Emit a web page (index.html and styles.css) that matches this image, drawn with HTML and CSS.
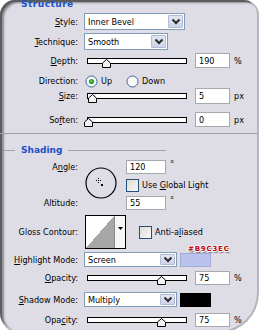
FILE: index.html
```html
<!DOCTYPE html>
<html>
<head>
<meta charset="utf-8">
<title>Bevel and Emboss</title>
<link rel="stylesheet" href="styles.css">
</head>
<body>
<div class="panel">
  <div class="legend legend-top"><span class="legend-text legend-text-wide">Structure</span></div>

  <div class="row r-style">
    <span class="lbl"><u>S</u>tyle:</span>
    <div class="select w-style"><span class="sel-text">Inner Bevel</span><span class="sel-btn"><svg width="10" height="7" viewBox="0 0 10 7"><polyline points="1.5,1.5 5,5 8.5,1.5" fill="none" stroke="#2a2a2a" stroke-width="2"/></svg></span></div>
  </div>

  <div class="row r-tech">
    <span class="lbl"><u>T</u>echnique:</span>
    <div class="select w-tech"><span class="sel-text">Smooth</span><span class="sel-btn"><svg width="10" height="7" viewBox="0 0 10 7"><polyline points="1.5,1.5 5,5 8.5,1.5" fill="none" stroke="#2a2a2a" stroke-width="2"/></svg></span></div>
  </div>

  <div class="row r-depth">
    <span class="lbl"><u>D</u>epth:</span>
    <div class="slider"><svg class="thumb" style="left:19%" width="9" height="9" viewBox="0 0 9 9"><polygon points="0.5,4 4.5,0.5 8.5,4 8.5,8.5 0.5,8.5" fill="#f2f2f2" stroke="#000"/></svg></div>
    <span class="num">190</span><span class="unit">%</span>
  </div>

  <div class="row r-dir">
    <span class="lbl">Direction:</span>
    <svg class="radio" width="13" height="13" viewBox="0 0 13 13"><circle cx="6.5" cy="6.5" r="5.5" fill="#fbfbfb" stroke="#3d6390"/><circle cx="6.5" cy="6.5" r="2.6" fill="#27a127"/><circle cx="6.2" cy="6.2" r="1" fill="#6fdc6f"/></svg>
    <span class="opt">Up</span>
    <svg class="radio radio-2" width="13" height="13" viewBox="0 0 13 13"><circle cx="6.5" cy="6.5" r="5.5" fill="#fbfbfb" stroke="#3d6390"/></svg>
    <span class="opt">Down</span>
  </div>

  <div class="row r-size">
    <span class="lbl"><u>S</u>ize:</span>
    <div class="slider"><svg class="thumb" style="left:5%" width="9" height="9" viewBox="0 0 9 9"><polygon points="0.5,4 4.5,0.5 8.5,4 8.5,8.5 0.5,8.5" fill="#f2f2f2" stroke="#000"/></svg></div>
    <span class="num num-16">5</span><span class="unit">px</span>
  </div>

  <div class="row r-soften">
    <span class="lbl">So<u>f</u>ten:</span>
    <div class="slider"><svg class="thumb" style="left:0%" width="9" height="9" viewBox="0 0 9 9"><polygon points="0.5,4 4.5,0.5 8.5,4 8.5,8.5 0.5,8.5" fill="#f2f2f2" stroke="#000"/></svg></div>
    <span class="num">0</span><span class="unit">px</span>
  </div>

  <div class="sep"></div>

  <div class="legend legend-shading"><span class="ln ln-l"></span><span class="legend-text">Shading</span><span class="ln ln-r"></span></div>

  <div class="angle-grid">
    <span class="lbl g-angle">A<u>n</u>gle:</span>
    <svg class="dial" width="32" height="32" viewBox="0 0 32 32">
      <circle cx="16" cy="16" r="15" fill="none" stroke="#000" stroke-width="1.2"/>
      <line x1="11" y1="13.5" x2="16" y2="13.5" stroke="#000" stroke-width="1" stroke-dasharray="1 1"/>
      <line x1="13.5" y1="11" x2="13.5" y2="16" stroke="#000" stroke-width="1" stroke-dasharray="1 1"/>
      <rect x="16" y="17" width="2" height="2" fill="#000"/>
    </svg>
    <div class="g-angle-in"><span class="num num-40 num-14">120</span><span class="deg">°</span></div>
    <div class="g-global"><span class="check"></span><span class="opt">Use <u>G</u>lobal Light</span></div>
    <span class="lbl g-alt">Altitude:</span>
    <div class="g-alt-in"><span class="num num-40 num-14">55</span><span class="deg">°</span></div>
  </div>

  <div class="row r-contour">
    <span class="lbl">Gloss Contour:</span>
    <div class="contour"><span class="contour-prev"></span><span class="contour-arrow"><svg width="5" height="3" viewBox="0 0 5 3"><polygon points="0,0 5,0 2.5,3" fill="#000"/></svg></span></div>
    <span class="check check-aa"></span><span class="opt">Anti-a<u>l</u>iased</span>
  </div>

  <div class="row r-hl">
    <span class="lbl"><u>H</u>ighlight Mode:</span>
    <div class="select w-mode"><span class="sel-text">Screen</span><span class="sel-btn"><svg width="10" height="7" viewBox="0 0 10 7"><polyline points="1.5,1.5 5,5 8.5,1.5" fill="none" stroke="#2a2a2a" stroke-width="2"/></svg></span></div>
    <span class="swatch swatch-hl"><span class="hex">#B9C3EC</span></span>
  </div>

  <div class="row r-op1">
    <span class="lbl"><u>O</u>pacity:</span>
    <div class="slider"><svg class="thumb" style="left:75%" width="9" height="9" viewBox="0 0 9 9"><polygon points="0.5,4 4.5,0.5 8.5,4 8.5,8.5 0.5,8.5" fill="#f2f2f2" stroke="#000"/></svg></div>
    <span class="num num-14">75</span><span class="unit">%</span>
  </div>

  <div class="row r-sh">
    <span class="lbl"><u>S</u>hadow Mode:</span>
    <div class="select w-mode"><span class="sel-text">Multiply</span><span class="sel-btn"><svg width="10" height="7" viewBox="0 0 10 7"><polyline points="1.5,1.5 5,5 8.5,1.5" fill="none" stroke="#2a2a2a" stroke-width="2"/></svg></span></div>
    <span class="swatch swatch-sh"></span>
  </div>

  <div class="row r-op2">
    <span class="lbl">Opa<u>c</u>ity:</span>
    <div class="slider"><svg class="thumb" style="left:75%" width="9" height="9" viewBox="0 0 9 9"><polygon points="0.5,4 4.5,0.5 8.5,4 8.5,8.5 0.5,8.5" fill="#f2f2f2" stroke="#000"/></svg></div>
    <span class="num num-14">75</span><span class="unit">%</span>
  </div>
</div>
</body>
</html>
```

FILE: styles.css
```css
* { box-sizing: border-box; }
html, body { margin: 0; padding: 0; background: #fff; }
body {
  font-family: "DejaVu Sans Condensed", "DejaVu Sans", sans-serif;
  font-stretch: condensed;
  font-size: 9px;
  color: #000;
}
u { text-decoration: underline; text-underline-offset: 1px; }

.panel {
  width: 259px;
  height: 333px;
  display: flex;
  flex-direction: column;
  background: #dedde6;
  border-radius: 15px 15px 40px 20px;
  border-right: 2px solid #b4b4bc;
  border-bottom: 2px solid #b4b4bc;
  box-shadow: inset 2px 2px 0 #5c5c5c, inset 4px 3px 2px #8c8c94;
  overflow: hidden;
}

.row { display: flex; align-items: center; flex: none; }
.lbl { width: 78px; flex: none; text-align: right; white-space: nowrap; }

/* legends */
.legend { display: flex; align-items: center; height: 12px; flex: none; }
.legend-top { margin-top: -2px; padding-left: 21px; }
.legend-text {
  font-family: "DejaVu Sans", sans-serif;
  font-stretch: normal;
  font-weight: bold;
  font-size: 9px;
  color: #1b50c8;
}
.legend-text-wide { letter-spacing: 0.5px; }
.legend .ln { height: 1px; background: #a2a2aa; flex: none; }
.legend .ln-l { width: 12px; margin-left: 3px; }
.legend .ln-r { width: 98px; }
.legend-shading { margin-top: 10px; }
.legend-shading .legend-text { margin: 0 6px 0 6px; }

/* rows */
.r-style { height: 17px; margin-top: 3px; }
.r-tech { height: 17px; margin-top: 3px; }
.r-depth { height: 15px; margin-top: 3px; }
.r-dir { height: 14px; margin-top: 6px; }
.r-size { height: 16px; margin-top: 0; }
.r-soften { height: 15px; margin-top: 8px; }
.sep { height: 1px; background: #a0a0a8; margin-top: 6px; flex: none; }
.r-contour { height: 34px; margin-top: 5px; }
.r-hl { height: 15px; margin-top: 3px; }
.r-op1 { height: 14px; margin-top: 4px; }
.r-sh { height: 15px; margin-top: 7px; }
.r-op2 { height: 14px; margin-top: 6px; }

/* select */
.select {
  display: flex;
  align-items: stretch;
  height: 17px;
  margin-left: 6px;
  border: 1px solid #7f9db9;
  background: #fff;
  flex: none;
}
.sel-text { flex: 1; padding-left: 3px; display: flex; align-items: center; white-space: nowrap; }
.sel-btn {
  width: 15px;
  margin: 1px;
  background: linear-gradient(#e2e6f3, #cdd3e8);
  border: 1px solid #b1bad6;
  border-radius: 1px;
  display: flex;
  align-items: center;
  justify-content: center;
}
.w-style { width: 101px; }
.w-tech { width: 84px; }
.w-mode { width: 93px; height: 15px; }

/* slider */
.slider {
  position: relative;
  width: 100px;
  height: 6px;
  margin-left: 9px;
  margin-right: 8px;
  border: 1px solid #000;
  background: #fff;
  flex: none;
}
.thumb { position: absolute; top: 0; margin-left: -4.5px; display: block; }

/* number boxes */
.num {
  width: 35px;
  height: 15px;
  border: 1px solid #a7a7ae;
  background: #fff;
  padding-left: 3px;
  display: flex;
  align-items: center;
  flex: none;
}
.num-16 { height: 16px; }
.num-14 { height: 14px; }
.num-40 { width: 40px; }
.unit { margin-left: 4px; }
.deg { margin-left: 4px; align-self: flex-start; line-height: 9px; }

/* radio / check */
.radio { display: block; flex: none; margin-left: 7px; }
.radio-2 { margin-left: 14px; }
.opt { margin-left: 3px; white-space: nowrap; }
.check {
  width: 13px;
  height: 13px;
  flex: none;
  border: 1px solid #24507c;
  background: linear-gradient(135deg, #dcdcd6, #f8f8f6);
}
.check-aa { margin-left: 13px; }

/* angle block */
.angle-grid {
  display: grid;
  grid-template-columns: 78px 48px auto;
  grid-template-rows: 14px 22px 14px;
  margin-top: 4px;
  flex: none;
}
.g-angle { grid-column: 1; grid-row: 1; align-self: center; }
.dial { grid-column: 2; grid-row: 1 / 4; margin: 7px 0 0 7px; display: block; }
.g-angle-in { grid-column: 3; grid-row: 1; display: flex; }
.g-global { grid-column: 3; grid-row: 2; display: flex; align-items: center; }
.g-alt { grid-column: 1; grid-row: 3; align-self: center; }
.g-alt-in { grid-column: 3; grid-row: 3; display: flex; }

/* contour */
.contour {
  display: flex;
  width: 41px;
  height: 34px;
  margin-left: 7px;
  border: 1px solid #000;
  background: #fff;
  flex: none;
}
.contour-prev {
  width: 29px;
  background: linear-gradient(to bottom right, #fff 50%, #a6a6a6 50%);
  border-right: 1px solid #8a8a8a;
}
.contour-arrow { flex: 1; display: flex; justify-content: center; padding-top: 11px; background: #f6f6f6; }

/* swatches */
.swatch {
  position: relative;
  width: 31px;
  height: 14px;
  margin-left: 3px;
  flex: none;
}
.swatch-hl { background: #b9c3ec; border: 1px solid #a3acd6; }
.swatch-sh { background: #000; }
.hex {
  position: absolute;
  left: 7px;
  top: -8px;
  font-family: "DejaVu Sans", sans-serif;
  font-stretch: normal;
  font-weight: bold;
  font-size: 7px;
  line-height: 7px;
  letter-spacing: 0.8px;
  color: #c00000;
  white-space: nowrap;
  text-shadow: 1px 0 #fff, -1px 0 #fff, 0 1px #fff, 0 -1px #fff, 1px 2px 1px #777;
}
```
